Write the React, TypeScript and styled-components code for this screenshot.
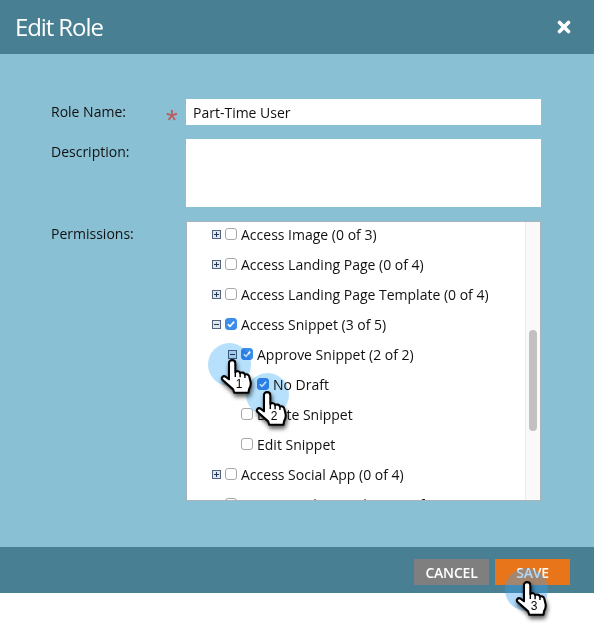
import React from 'react';
import styled, { createGlobalStyle } from 'styled-components';

const GlobalStyle = createGlobalStyle`
	html, body {
		margin: 0;
		padding: 0;
		background: #fff;
		font-family: "Open Sans", "Liberation Sans", sans-serif;
	}
`;

const Dialog = styled.div`
	position: relative;
	width: 594px;
	height: 628px;
	overflow: hidden;
	background: #fff;
`;

const Header = styled.header`
	height: 54px;
	background: #487f93;
	display: flex;
	align-items: center;
	justify-content: space-between;
	padding: 0 23px 0 15px;
	color: #fff;
`;

const Title = styled.h1`
	margin: 0;
	font-size: 24px;
	font-weight: 400;
	line-height: 54px;
	letter-spacing: -1.1px;
`;

const Body = styled.div`
	height: 493px;
	box-sizing: border-box;
	background: #89c0d3;
	padding: 45px 53px 0 51px;
	display: grid;
	grid-template-columns: 135px 355px;
	grid-template-rows: 26px 68px 280px;
	row-gap: 14px;
`;

const Label = styled.label`
	font-size: 14px;
	line-height: 19px;
	color: #111;
	padding-top: 3px;
`;

const Field = styled.div`
	position: relative;
	background: #fff;
	font-size: 14px;
	line-height: 28px;
	color: #111;
	padding-left: 7px;
`;

const Required = styled.span`
	position: absolute;
	left: -20px;
	top: 6px;
	color: #bd5a5e;
	font-family: "Liberation Sans", sans-serif;
	font-size: 30px;
	line-height: 30px;
`;

const TreeBox = styled.div`
	position: relative;
	background: #fff;
	border: 1px solid #a9b4ba;
	overflow: hidden;
	padding-left: 25px;
`;

const TreeList = styled.div`
	margin-top: -3px;
`;

const ScrollTrack = styled.div`
	position: absolute;
	top: 0;
	right: 0;
	bottom: 0;
	width: 15px;
	background: #f9f9f9;
	border-left: 1px solid #ececec;
	box-sizing: border-box;
`;

const ScrollThumb = styled.div`
	position: absolute;
	top: 108px;
	left: 3px;
	width: 8px;
	height: 101px;
	border-radius: 4px;
	background: #c1c1c1;
`;

const TreeRow = styled.div<{ $level: number }>`
	height: 30px;
	display: flex;
	align-items: center;
	padding-left: ${(p) => p.$level * 16}px;
	font-size: 14px;
	color: #111;
	white-space: nowrap;
`;

const Spacer = styled.span`
	width: 13px;
	flex: none;
`;

const Expander = styled.svg`
	width: 9px;
	height: 9px;
	margin-right: 4px;
	flex: none;
`;

const Box = styled.span<{ $on?: boolean }>`
	box-sizing: border-box;
	width: 12px;
	height: 12px;
	flex: none;
	margin-right: 4px;
	border-radius: 3px;
	border: 1px solid ${(p) => (p.$on ? '#3d8ee8' : '#a8a8a8')};
	background: ${(p) => (p.$on ? '#3d8ee8' : '#fff')};
	display: flex;
	align-items: center;
	justify-content: center;
`;

const Footer = styled.footer`
	height: 46px;
	background: #487f93;
	display: flex;
	justify-content: flex-end;
	align-items: flex-start;
	gap: 6px;
	padding: 12px 24px 0 0;
	box-sizing: border-box;
`;

const Button = styled.button<{ $primary?: boolean }>`
	width: 75px;
	height: 26px;
	border: 0;
	padding: 0;
	background: ${(p) => (p.$primary ? '#e8751a' : '#7f7f7f')};
	color: #fff;
	font-family: inherit;
	font-size: 14px;
	font-weight: 600;
	letter-spacing: -0.2px;
`;

const Spot = styled.div<{ $x: number; $y: number; $blend?: boolean }>`
	position: absolute;
	left: ${(p) => p.$x}px;
	top: ${(p) => p.$y}px;
	width: 43px;
	height: 43px;
	border-radius: 50%;
	background: ${(p) => (p.$blend ? '#b6e0fb' : 'rgba(60, 160, 240, 0.4)')};
	mix-blend-mode: ${(p) => (p.$blend ? 'multiply' : 'normal')};
`;

const HandWrap = styled.div<{ $x: number; $y: number }>`
	position: absolute;
	left: ${(p) => p.$x}px;
	top: ${(p) => p.$y}px;
	width: 35px;
	height: 36px;
`;

const HandSvg = styled.svg`
	overflow: visible;
	filter: drop-shadow(1px 3px 2px rgba(0, 0, 0, 0.65));
`;

const Step = styled.span`
	position: absolute;
	left: 13px;
	top: 18px;
	width: 12px;
	text-align: center;
	font-family: "Liberation Sans", sans-serif;
	font-size: 12px;
	line-height: 14px;
	color: #000;
`;

const Toggle = ({ open }: { open?: boolean }) => (
	<Expander viewBox="0 0 9 9">
		<rect x="0.5" y="0.5" width="8" height="8" fill="#dfe6ee" stroke="#50657d" />
		<path d={open ? 'M2 4.5h5' : 'M2 4.5h5M4.5 2v5'} stroke="#26384e" fill="none" />
	</Expander>
);

const Check = ({ on }: { on?: boolean }) => (
	<Box $on={on}>
		{on && (
			<svg width="10" height="10" viewBox="0 0 10 10">
				<path d="M1.8 5.2 4 7.4 8.2 2.6" stroke="#fff" strokeWidth="1.6" fill="none" />
			</svg>
		)}
	</Box>
);

const Hand = ({ x, y, step }: { x: number; y: number; step: number }) => (
	<HandWrap $x={x} $y={y}>
		<HandSvg width="35" height="36" viewBox="0 0 32 32" preserveAspectRatio="none">
			<path
				d="M11 1c1.700 0 3 1.200 3 2.800v7.700c1.200-1.200 4-.8 4.400 1 1.200-1 4-.5 4.400 1.400 1.200-.8 3.600-.2 4 1.800l1.200 5c.4 2.600-.4 4.600-1.400 6l-.6 3.300H13l-1-3-9.800-8.400c-1.400-1.800.6-4.200 2.800-3l3.200 2.400V3.800C8.200 2.200 9.300 1 11 1z"
				fill="#fff"
				stroke="#000"
				strokeWidth="1.900"
				strokeLinejoin="round"
			/>
			<path d="M14 11.500v4.500M18.400 12.500v3.800M22.800 13.900v3" stroke="#000" strokeWidth="1.300" fill="none" />
		</HandSvg>
		<Step>{step}</Step>
	</HandWrap>
);

const rows = [
	{ level: 0, toggle: 'closed', text: 'Access Image (0 of 3)' },
	{ level: 0, toggle: 'closed', text: 'Access Landing Page (0 of 4)' },
	{ level: 0, toggle: 'closed', text: 'Access Landing Page Template (0 of 4)' },
	{ level: 0, toggle: 'open', on: true, text: 'Access Snippet (3 of 5)' },
	{ level: 1, toggle: 'open', on: true, text: 'Approve Snippet (2 of 2)' },
	{ level: 2, on: true, text: 'No Draft' },
	{ level: 1, text: 'Delete Snippet' },
	{ level: 1, text: 'Edit Snippet' },
	{ level: 0, toggle: 'closed', text: 'Access Social App (0 of 4)' },
	{ level: 0, toggle: 'closed', text: 'Access Analytics Admin (0 of 3)' },
];

const App = () => {
	return (
		<Dialog>
			<GlobalStyle />
			<Header>
				<Title>Edit Role</Title>
				<svg width="14" height="14" viewBox="0 0 14 14">
					<path d="M2.500 2.500l9 9M11.500 2.500l-9 9" stroke="#fff" strokeWidth="3.600" strokeLinecap="round" />
				</svg>
			</Header>
			<Body>
				<Label>Role Name:</Label>
				<Field>
					<Required>*</Required>
					Part-Time User
				</Field>
				<Label>Description:</Label>
				<Field />
				<Label>Permissions:</Label>
				<TreeBox>
					<TreeList>
						{rows.map((r) => (
							<TreeRow key={r.text} $level={r.level}>
								{r.toggle ? <Toggle open={r.toggle === 'open'} /> : <Spacer />}
								<Check on={r.on} />
								{r.text}
							</TreeRow>
						))}
					</TreeList>
					<ScrollTrack>
						<ScrollThumb />
					</ScrollTrack>
				</TreeBox>
			</Body>
			<Footer>
				<Button>CANCEL</Button>
				<Button $primary>SAVE</Button>
			</Footer>
			<Spot $x={208} $y={343} $blend />
			<Spot $x={246} $y={373} $blend />
			<Spot $x={505} $y={568} />
			<Hand x={220} y={359} step={1} />
			<Hand x={255} y={391} step={2} />
			<Hand x={515} y={581} step={3} />
		</Dialog>
	);
};

export default App;
